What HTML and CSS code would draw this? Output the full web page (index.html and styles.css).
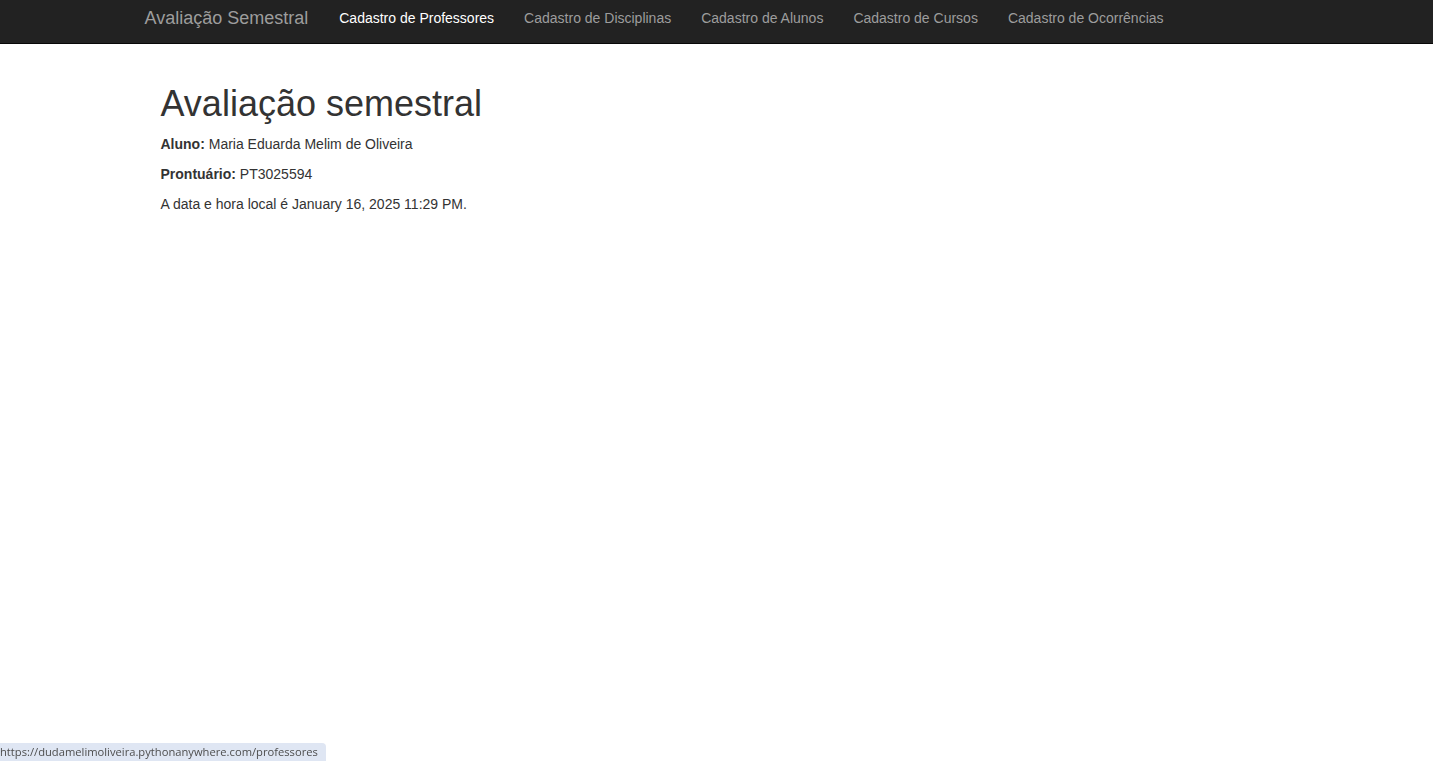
FILE: index.html
```html
<!DOCTYPE html>
<html lang="pt">
<head>
<meta charset="utf-8">
<title>Avaliação Semestral</title>
<link rel="stylesheet" href="styles.css">
</head>
<body>
<nav class="navbar">
  <div class="container nav-inner">
    <a class="brand" href="#">Avaliação Semestral</a>
    <ul class="nav-links">
      <li><a class="active" href="#">Cadastro de Professores</a></li>
      <li><a href="#">Cadastro de Disciplinas</a></li>
      <li><a href="#">Cadastro de Alunos</a></li>
      <li><a href="#">Cadastro de Cursos</a></li>
      <li><a href="#">Cadastro de Ocorrências</a></li>
    </ul>
  </div>
</nav>
<main class="container content">
  <h1 class="title">Avaliação semestral</h1>
  <p><b>Aluno:</b> Maria Eduarda Melim de Oliveira</p>
  <p><b>Prontuário:</b> PT3025594</p>
  <p>A data e hora local é January 16, 2025 11:29 PM.</p>
</main>
<div class="status">https://dudamelimoliveira.pythonanywhere.com/professores</div>
</body>
</html>
```
FILE: styles.css
```css
html, body {
  margin: 0;
  height: 100%;
}
body {
  font-family: "Liberation Sans", Arial, sans-serif;
  font-size: 14px;
  line-height: 20px;
  color: #333;
  background: #fff;
}
.container {
  width: 1170px;
  margin: 0 auto;
  box-sizing: border-box;
}
.navbar {
  background: #222;
  border-bottom: 1px solid #080808;
  height: 43px;
}
.nav-inner {
  display: flex;
  align-items: center;
  height: 43px;
  padding-left: 13px;
}
.brand {
  font-size: 18px;
  color: #9d9d9d;
  text-decoration: none;
  margin-top: -7px;
  margin-right: 31px;
}
.nav-links {
  display: flex;
  list-style: none;
  margin: -7px 0 0 0;
  padding: 0;
  gap: 30px;
}
.nav-links a {
  color: #9d9d9d;
  text-decoration: none;
}
.nav-links a.active {
  color: #fff;
}
.content {
  padding: 0 29px;
}
.title {
  font-size: 36px;
  font-weight: 500;
  line-height: 40px;
  margin: 40px 0 10px;
}
.content p {
  margin: 0 0 10px;
}
.status {
  position: fixed;
  left: 0;
  bottom: 0;
  background: #dfe6f3;
  color: #4d4d4d;
  font-family: "Open Sans", "Noto Sans", sans-serif;
  font-size: 11.2px;
  line-height: 18px;
  padding: 0 8px 0 0;
  border-top-right-radius: 4px;
}
```
